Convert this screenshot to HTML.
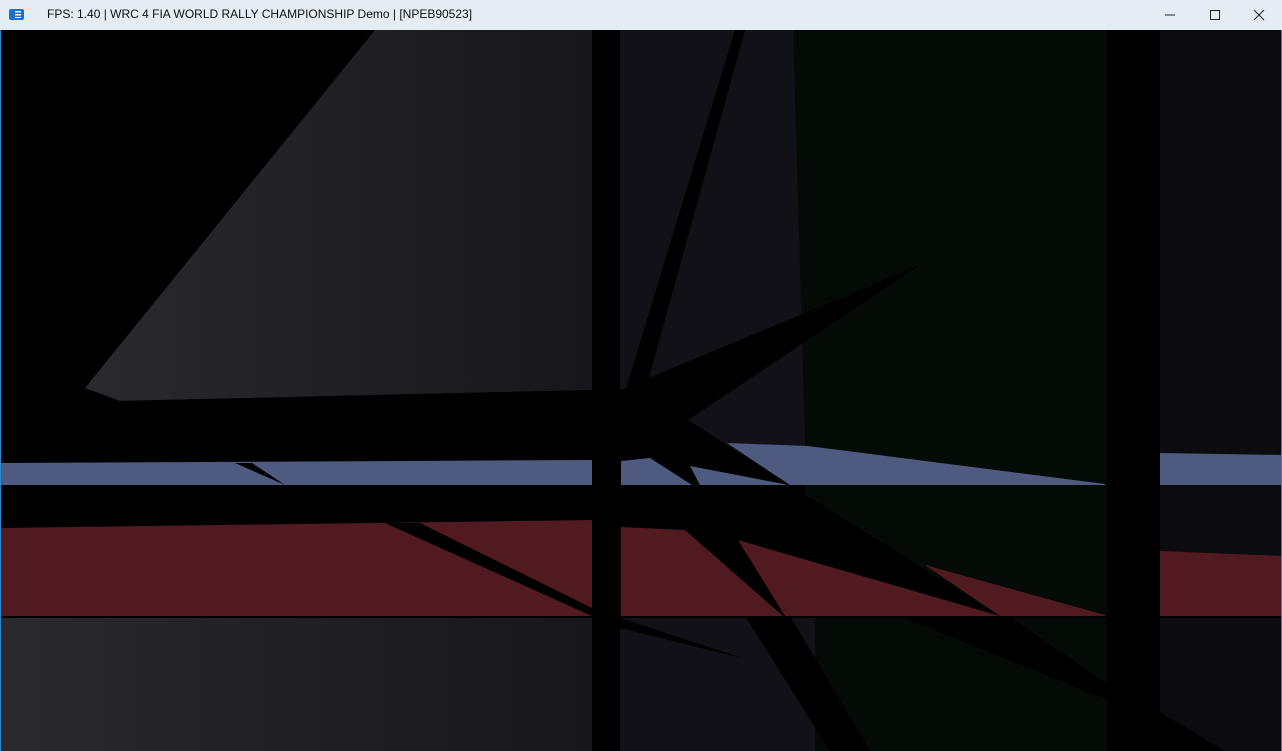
<!DOCTYPE html>
<html><head><style>
html,body{margin:0;padding:0;width:1282px;height:751px;overflow:hidden;background:#000}
#tb{position:absolute;left:0;top:0;width:1282px;height:30px;background:#e3edf3}
#tt{position:absolute;left:47px;top:7px;font:12px "Liberation Sans",sans-serif;color:#111}
#ic{position:absolute;left:9px;top:9px;width:15px;height:11px;background:#1a6fd0;border-radius:2px}
#ic:after{content:"";position:absolute;left:6px;top:2px;width:6px;height:7px;background:repeating-linear-gradient(#fff 0 1.5px,#1a6fd0 1.5px 3px)}
#sc{position:absolute;left:0;top:30px}
</style></head><body>
<div id="tb"><div id="ic"></div><div id="tt">FPS: 1.40 | WRC 4 FIA WORLD RALLY CHAMPIONSHIP Demo | [NPEB90523]</div>
<svg style="position:absolute;left:1160px;top:8px" width="112" height="14">
<line x1="5" y1="7" x2="15" y2="7" stroke="#222"/>
<rect x="50.5" y="2.5" width="9" height="9" fill="none" stroke="#222"/>
<line x1="94" y1="2" x2="104" y2="12" stroke="#222"/><line x1="104" y1="2" x2="94" y2="12" stroke="#222"/>
</svg></div>
<svg id="sc" width="1282" height="721" viewBox="0 30 1282 721">
<defs>
<linearGradient id="g1" x1="0" x2="1"><stop offset="0" stop-color="#2a292d"/><stop offset="1" stop-color="#17161b"/></linearGradient>
</defs>
<rect x="0" y="30" width="1282" height="721" fill="#000"/>
<polygon points="375,30 592,30 592,390 120,401 85,388" fill="url(#g1)"/>
<rect x="620" y="30" width="195" height="721" fill="#121117"/>
<polygon points="793,30 1107,30 1107,751 815,751 815,616 805,616 805,440" fill="#040b06"/>
<rect x="1160" y="30" width="122" height="721" fill="#0c0c10"/>
<rect x="0" y="617" width="592" height="134" fill="url(#g1)"/>
<polygon points="75,402 592,390 592,463 0,463 0,400" fill="#000"/>
<polygon points="620,390 920,265 688,420 790,485 620,485" fill="#000"/>
<polygon points="625,392 735,30 745,30 645,392" fill="#000"/>
<rect x="0" y="485" width="805" height="131" fill="#000"/>
<polygon points="0,463 592,460 592,485 0,485" fill="#4f5a80"/>
<polygon points="235,463 252,463 285,485" fill="#000"/>
<polygon points="621,461 650,458 692,485 621,485" fill="#4f5a80"/>
<polygon points="690,466 789,485 700,485" fill="#4f5a80"/>
<polygon points="727,443 808,446 1105,484 1105,485 790,485" fill="#4f5a80"/>
<polygon points="1108,479 1157,484 1157,485 1108,485" fill="#4f5a80"/>
<polygon points="1160,453 1282,455 1282,485 1160,485" fill="#4f5a80"/>
<polygon points="790,485 1000,616 805,616 805,485" fill="#000"/>
<polygon points="0,528 592,520 592,616 0,616" fill="#511a21"/>
<polygon points="385,523 420,523 592,608 592,616" fill="#000"/>
<polygon points="621,527 685,530 783,616 621,616" fill="#511a21"/>
<polygon points="738,540 1000,616 785,616" fill="#511a21"/>
<polygon points="925,565 1105,615 1105,616 1000,616" fill="#511a21"/>
<polygon points="1108,604 1158,616 1108,616" fill="#511a21"/>
<polygon points="1160,551 1282,556 1282,616 1160,616" fill="#511a21"/>
<rect x="592" y="30" width="28" height="721" fill="#000"/>
<rect x="1107" y="30" width="53" height="721" fill="#000"/>
<polygon points="620,618 742,658 620,628" fill="#000"/>
<polygon points="745,616 790,616 870,751 830,751" fill="#000"/>
<polygon points="900,616 1009,616 1107,684 1107,700" fill="#000"/>
<polygon points="1160,712 1225,751 1160,751" fill="#000"/>
<rect x="0" y="616" width="1282" height="2" fill="#000"/>
<rect x="0" y="30" width="1" height="721" fill="#2b86d0"/>
<rect x="1281" y="30" width="1" height="721" fill="#2b86d0"/>
</svg>
</body></html>
